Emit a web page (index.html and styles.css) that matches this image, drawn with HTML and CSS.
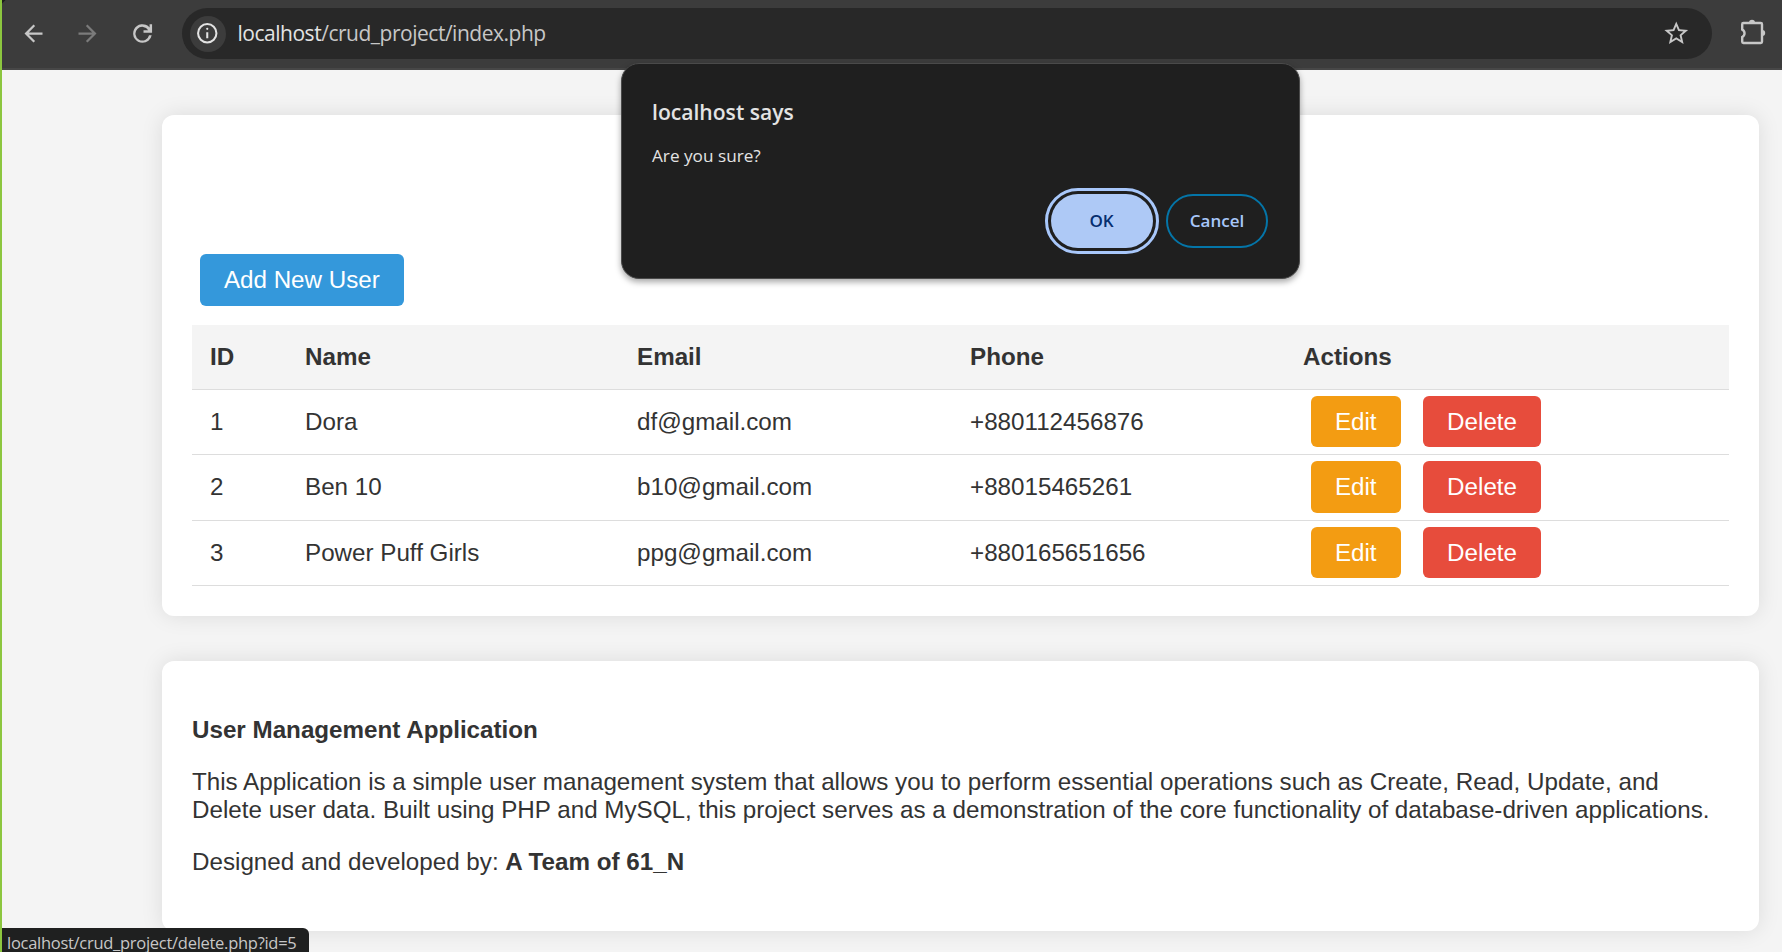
FILE: index.html
```html
<!DOCTYPE html>
<html lang="en">
<head>
<meta charset="utf-8">
<title>User Management</title>
<link rel="stylesheet" href="styles.css">
</head>
<body>
<div class="window">
  <header class="toolbar">
    <svg class="nav-icon" viewBox="0 0 24 24"><path d="M20 11H7.83l5.59-5.59L12 4l-8 8 8 8 1.41-1.41L7.83 13H20z"/></svg>
    <svg class="nav-icon disabled" viewBox="0 0 24 24"><path d="M12 4l-1.41 1.41L16.17 11H4v2h12.17l-5.58 5.59L12 20l8-8z"/></svg>
    <svg class="nav-icon reload" viewBox="0 0 24 24"><path d="M12 20.300a8.300 8.300 0 1 1 6.300-13.700V3.700h2.200v7.600h-7.600V9.100h4.200A6.100 6.100 0 1 0 17.800 13.500h2.350A8.300 8.300 0 0 1 12 20.300z"/></svg>
    <div class="omnibox">
      <span class="site-info">
        <svg viewBox="0 0 24 24"><path d="M11 17h2v-6h-2zm1-8.200a1.100 1.100 0 1 0 0-2.200 1.100 1.100 0 0 0 0 2.200zM12 22a10 10 0 1 1 0-20 10 10 0 0 1 0 20zm0-2a8 8 0 1 0 0-16 8 8 0 0 0 0 16z"/></svg>
      </span>
      <span class="url"><b>localhost</b>/crud_project/index.php</span>
      <svg class="star" viewBox="0 0 24 24"><path d="M22 9.240l-7.190-.62L12 2 9.190 8.630 2 9.240l5.460 4.730L5.820 21 12 17.270 18.180 21l-1.630-7.030zM12 15.400l-3.760 2.270 1-4.280-3.320-2.880 4.380-.38L12 6.100l1.710 4.040 4.380.38-3.320 2.880 1 4.280z"/></svg>
    </div>
    <svg class="puzzle" viewBox="0 0 26 26"><path d="M2.200 5.200q0-1.200 1.200-1.200H20.800q1.200 0 1.200 1.200V22.800q0 1.200-1.200 1.200H3.400q-1.200 0-1.200-1.200V18a4.100 4.100 0 0 0 0-7.400z" fill="none" stroke="#c7c7c7" stroke-width="2.400"/><path d="M9 3.800a3 3 0 0 1 6 0zM22.200 11a3 3 0 0 1 0 6z"/></svg>
  </header>
  <main class="page">
    <section class="card">
      <div class="heading-space"></div>
      <a class="btn add">Add New User</a>
      <table class="users">
        <colgroup><col class="c-id"><col class="c-name"><col class="c-email"><col class="c-phone"><col></colgroup>
        <thead><tr><th>ID</th><th>Name</th><th>Email</th><th>Phone</th><th>Actions</th></tr></thead>
        <tbody>
          <tr><td>1</td><td>Dora</td><td>df@gmail.com</td><td>+880112456876</td><td><a class="btn edit">Edit</a> <a class="btn delete">Delete</a></td></tr>
          <tr class="tall"><td>2</td><td>Ben 10</td><td>b10@gmail.com</td><td>+88015465261</td><td><a class="btn edit">Edit</a> <a class="btn delete">Delete</a></td></tr>
          <tr><td>3</td><td>Power Puff Girls</td><td>ppg@gmail.com</td><td>+880165651656</td><td><a class="btn edit">Edit</a> <a class="btn delete">Delete</a></td></tr>
        </tbody>
      </table>
    </section>
    <section class="card about">
      <p><strong>User Management Application</strong></p>
      <p>This Application is a simple user management system that allows you to perform essential operations such as Create, Read, Update, and Delete user data. Built using PHP and MySQL, this project serves as a demonstration of the core functionality of database-driven applications.</p>
      <p>Designed and developed by: <strong>A Team of 61_N</strong></p>
    </section>
  </main>
  <div class="dialog">
    <h1>localhost says</h1>
    <p>Are you sure?</p>
    <div class="dialog-actions">
      <button class="ok">OK</button>
      <button class="cancel">Cancel</button>
    </div>
  </div>
  <div class="status">localhost/crud_project/delete.php?id=5</div>
</div>
</body>
</html>
```
FILE: styles.css
```css
* { box-sizing: border-box; }
html, body { margin: 0; height: 100%; overflow: hidden; }
body { background: #f4f4f4; color: #333; font: 24.2px "Liberation Sans", Arial, sans-serif; }
.window { position: relative; height: 952px; border-left: 2px solid #8cc63f; overflow: hidden; }

.toolbar { display: flex; align-items: center; height: 70px; padding: 0 14px 1px 18px; background: linear-gradient(135deg, #1c1c1c 2px, #3c3c3c 3px); border-bottom: 2px solid #474747; }
.toolbar svg { display: block; flex: none; fill: #c7c7c7; }
.nav-icon { width: 27px; height: 27px; margin-right: 27px; }
.toolbar .disabled { fill: #7b7b7b; }
.toolbar .reload { margin: 0 26px 0 1px; }
.omnibox { display: flex; flex: none; align-items: center; width: 1530px; height: 51px; padding: 0 22px 0 7.500px; border-radius: 26px; background: #282828; }
.site-info { display: grid; place-items: center; width: 36px; height: 36px; border-radius: 50%; background: #3c3c3c; }
.site-info svg { width: 24.500px; height: 24.500px; fill: #e3e3e3; }
.url { flex: 1; margin: -1px 0 0 12px; font: 21px/30px "Open Sans", sans-serif; letter-spacing: -.48px; color: #c7c7c7; white-space: nowrap; }
.url b { font-weight: 400; color: #e3e3e3; }
.star { width: 28.5px; height: 28.5px; }
.puzzle { width: 26px; height: 26px; margin: 0 0 3px 28px; }

.page { display: flex; flex-direction: column; gap: 45px; padding: 45px 23px 0 160px; }
.card { padding: 30px; border-radius: 12px; background: #fff; box-shadow: 0 0 22px rgba(0, 0, 0, .1); }
.heading-space { height: 109px; }
.btn { display: inline-block; height: 51px; margin: 0 7.5px; padding: 12px 24.400px; border-radius: 6px; color: #fff; line-height: 27px; vertical-align: top; }
.add { height: 52px; background: #3498db; }
.edit { background: #f39c12; }
.delete { background: #e74c3c; }
.tall .btn { height: 52px; }

.users { width: 100%; margin-top: 19px; border-collapse: separate; border-spacing: 0; table-layout: fixed; }
.c-id { width: 95px; }
.c-name { width: 332px; }
.c-email { width: 333px; }
.c-phone { width: 333px; }
.users th, .users td { height: 65px; padding: 0 18px; border-bottom: 1px solid #ddd; text-align: left; line-height: 28px; }
.users th { background: #f4f4f4; }
.users .tall td { height: 66px; padding-bottom: 1px; }
.users td:last-child, .users .tall td:last-child { padding-top: 6px; padding-bottom: 0; vertical-align: top; }

.about { height: 270px; padding-top: 55px; }
.about p { margin: 0 0 24px; line-height: 28px; }

.dialog { position: absolute; left: 619px; top: 63px; width: 679px; height: 216px; padding: 33px 31px 0 30px; border: 1px solid #4a4a4a; border-radius: 18px; background: #1f1f1f; box-shadow: 0 3px 6px rgba(0, 0, 0, .35); color: #e3e3e3; font-family: "Open Sans", sans-serif; }
.dialog h1 { margin: 0; font-size: 21.100px; font-weight: 600; line-height: 30px; }
.dialog p { margin: 17px 0 0; font-size: 17.200px; line-height: 24px; }
.dialog-actions { display: flex; justify-content: flex-end; gap: 13px; margin-top: 26px; }
.dialog button { width: 102px; height: 54px; padding: 0 0 2px; border-radius: 27px; font: 600 17px "Open Sans", sans-serif; }
.dialog .ok { padding-right: 1px; border: 0; outline: 3px solid #a8c7fa; outline-offset: 3px; background: #aec9f6; color: #062e6f; }
.cancel { border: 2px solid #0475a8; background: none; color: #a8c7fa; }

.status { position: absolute; left: 0; bottom: 0; width: 307px; height: 24px; padding: 4px 0 0 5px; border-radius: 0 6px 0 0; background: #1f2020; color: #c7c7c7; font: 16.500px/22px "Open Sans", sans-serif; letter-spacing: -.28px; white-space: nowrap; }
```
